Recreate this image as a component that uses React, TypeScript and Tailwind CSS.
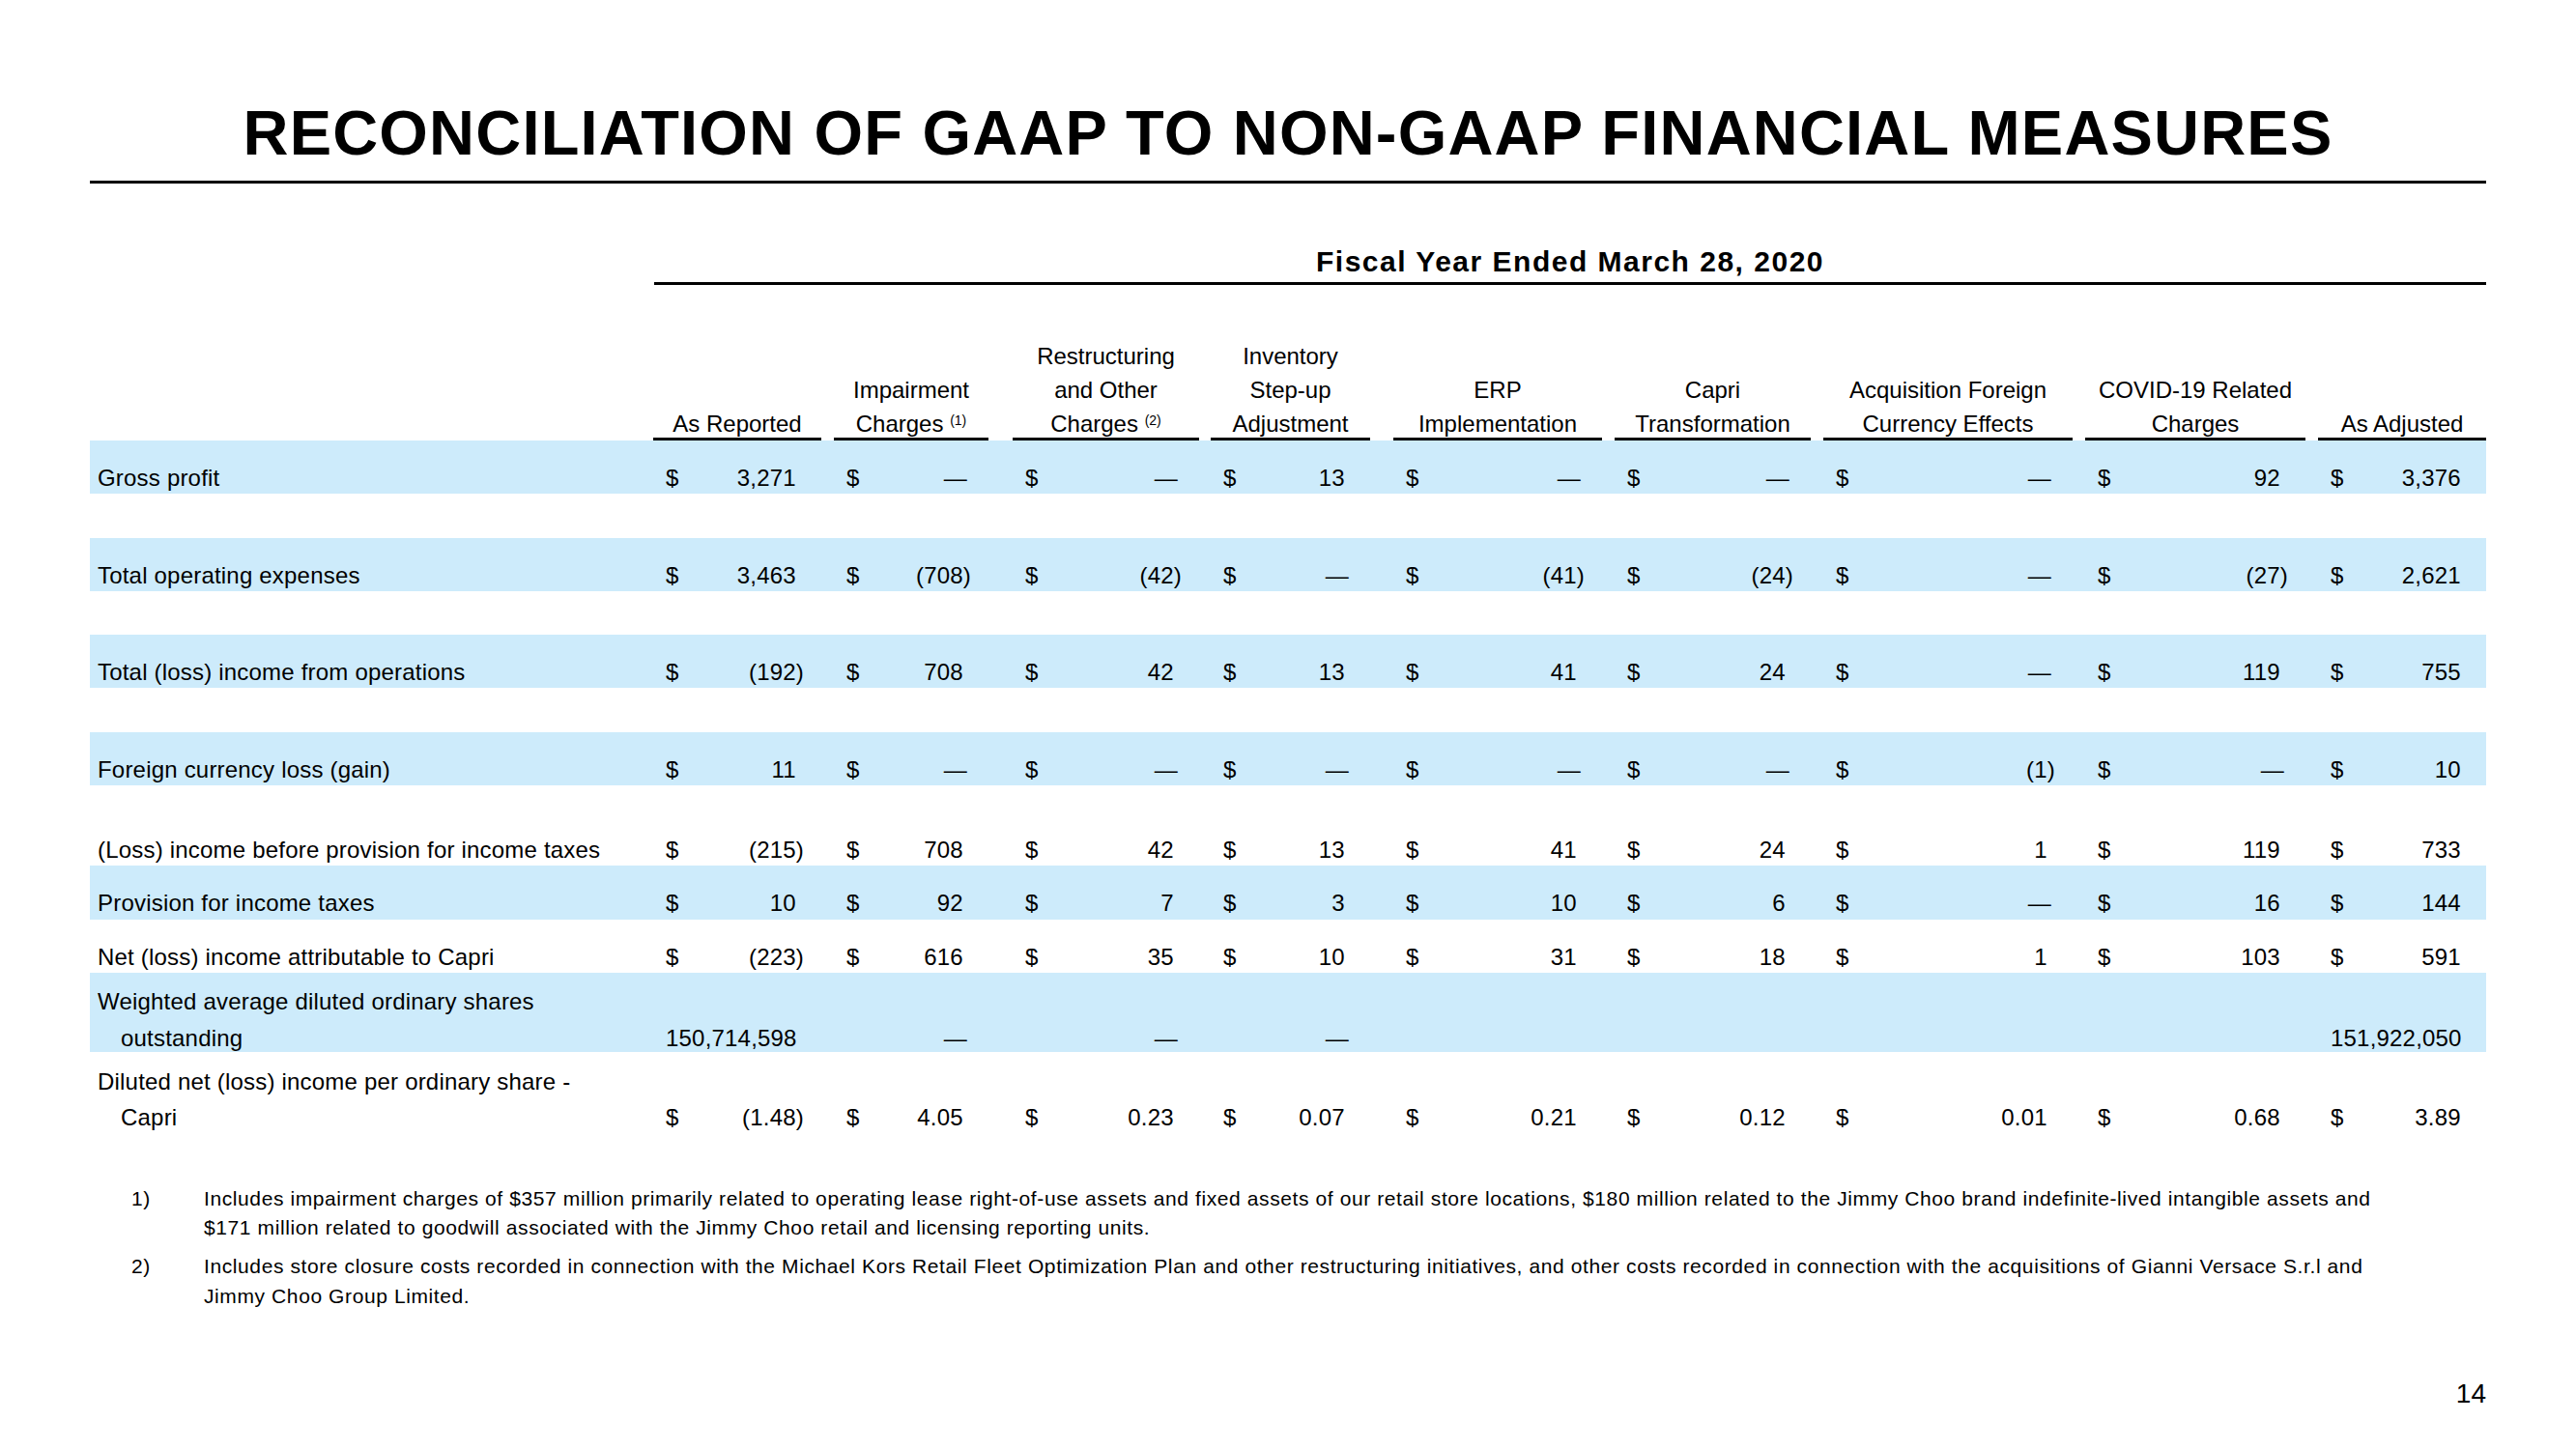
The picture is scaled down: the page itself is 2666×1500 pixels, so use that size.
import React from 'react';

const colW = ['w-[187px]', 'w-[185px]', 'w-[205px]', 'w-[189px]', 'w-[229px]', 'w-[216px]', 'w-[271px]', 'w-[241px]', 'w-[174px]'];
const colU = ['w-[174px]', 'w-[160px]', 'w-[193px]', 'w-[165px]', 'w-[216px]', 'w-[203px]', 'w-[258px]', 'w-[228px]', 'w-[174px]'];

const headers: React.ReactNode[][] = [
  ['As Reported'],
  ['Impairment', <>Charges <sup className="text-[14px]">(1)</sup></>],
  ['Restructuring', 'and Other', <>Charges <sup className="text-[14px]">(2)</sup></>],
  ['Inventory', 'Step-up', 'Adjustment'],
  ['ERP', 'Implementation'],
  ['Capri', 'Transformation'],
  ['Acquisition Foreign', 'Currency Effects'],
  ['COVID-19 Related', 'Charges'],
  ['As Adjusted'],
];

type RowDef = {
  label: React.ReactNode;
  vals: string[];
  band: boolean;
  h: string;
  pb: string;
  dollar: boolean[];
};

const allD = [true, true, true, true, true, true, true, true, true];

const rows: (RowDef | { spacer: string })[] = [
  { label: 'Gross profit', vals: ['3,271', '—', '—', '13', '—', '—', '—', '92', '3,376'], band: true, h: 'h-[55px]', pb: 'pb-[4px]', dollar: allD },
  { spacer: 'h-[46px]' },
  { label: 'Total operating expenses', vals: ['3,463', '(708)', '(42)', '—', '(41)', '(24)', '—', '(27)', '2,621'], band: true, h: 'h-[55px]', pb: 'pb-[4px]', dollar: allD },
  { spacer: 'h-[45px]' },
  { label: 'Total (loss) income from operations', vals: ['(192)', '708', '42', '13', '41', '24', '—', '119', '755'], band: true, h: 'h-[55px]', pb: 'pb-[4px]', dollar: allD },
  { spacer: 'h-[46px]' },
  { label: 'Foreign currency loss (gain)', vals: ['11', '—', '—', '—', '—', '—', '(1)', '—', '10'], band: true, h: 'h-[55px]', pb: 'pb-[4px]', dollar: allD },
  { label: '(Loss) income before provision for income taxes', vals: ['(215)', '708', '42', '13', '41', '24', '1', '119', '733'], band: false, h: 'h-[83px]', pb: 'pb-[4px]', dollar: allD },
  { label: 'Provision for income taxes', vals: ['10', '92', '7', '3', '10', '6', '—', '16', '144'], band: true, h: 'h-[56px]', pb: 'pb-[5px]', dollar: allD },
  { label: 'Net (loss) income attributable to Capri', vals: ['(223)', '616', '35', '10', '31', '18', '1', '103', '591'], band: false, h: 'h-[55px]', pb: 'pb-[4px]', dollar: allD },
  {
    label: (
      <>
        <div>Weighted average diluted ordinary shares</div>
        <div className="mt-[14px] pl-[24px]">outstanding</div>
      </>
    ),
    vals: ['150,714,598', '—', '—', '—', '', '', '', '', '151,922,050'],
    band: true,
    h: 'h-[82px]',
    pb: 'pb-[2px]',
    dollar: [false, false, false, false, false, false, false, false, false],
  },
  {
    label: (
      <>
        <div>Diluted net (loss) income per ordinary share -</div>
        <div className="mt-[13px] pl-[24px]">Capri</div>
      </>
    ),
    vals: ['(1.48)', '4.05', '0.23', '0.07', '0.21', '0.12', '0.01', '0.68', '3.89'],
    band: false,
    h: 'h-[82px]',
    pb: 'pb-[2px]',
    dollar: allD,
  },
];

function Val({ v }: { v: string }) {
  if (v === '') return <span />;
  if (v === '—')
    return (
      <span>
        —<span className="inline-block w-[4px]" />
      </span>
    );
  if (v.startsWith('(')) return <span>{v}</span>;
  return (
    <span>
      {v}
      <span className="invisible">)</span>
    </span>
  );
}

export default function App() {
  return (
    <div className="w-[2666px] h-[1500px] bg-white text-black font-['Liberation_Sans','Arial',sans-serif] overflow-hidden">
      <div className="px-[93px]">
        {/* Title */}
        <div className="pt-[105px] text-[65px] leading-[65px] font-bold text-center tracking-[1.2px] whitespace-nowrap">
          RECONCILIATION OF GAAP TO NON-GAAP FINANCIAL MEASURES
        </div>
        <div className="mt-[17px] h-[3px] bg-black" />

        {/* Fiscal year header */}
        <div className="ml-[584px]">
          <div className="mt-[66px] text-[30px] leading-[30px] font-bold text-center tracking-[1.5px] whitespace-nowrap">
            Fiscal Year Ended March 28, 2020
          </div>
          <div className="mt-[6px] h-[3px] bg-black" />
        </div>

        {/* Column headers */}
        <div className="flex items-end h-[161px] text-[24px] whitespace-nowrap">
          <div className="w-[583px] shrink-0" />
          {headers.map((lines, i) => (
            <div key={i} className={`${colW[i]} shrink-0`}>
              <div className={`${colU[i]} border-b-[3px] border-black text-center`}>
                <div className="mb-[-3px]">
                  {lines.map((l, j) => (
                    <div key={j} className="leading-[35px]">
                      {l}
                    </div>
                  ))}
                </div>
              </div>
            </div>
          ))}
        </div>

        {/* Rows */}
        <div className="text-[24px] leading-[24px] tracking-[0.2px] whitespace-nowrap">
          {rows.map((r, idx) => {
            if ('spacer' in r) return <div key={idx} className={r.spacer} />;
            return (
              <div key={idx} className={`flex items-end ${r.h} ${r.pb} ${r.band ? 'bg-[#cdebfb]' : ''}`}>
                <div className="w-[583px] shrink-0 pl-[8px]">{r.label}</div>
                {r.vals.map((v, i) => (
                  <div key={i} className={`${colW[i]} shrink-0`}>
                    <div className={`${colU[i]} flex justify-between pl-[13px] pr-[18px]`}>
                      <span>{r.dollar[i] && v !== '' ? '$' : ''}</span>
                      <Val v={v} />
                    </div>
                  </div>
                ))}
              </div>
            );
          })}
        </div>

        {/* Footnotes */}
        <div className="mt-[55px] text-[21px] leading-[30px] tracking-[0.6px] whitespace-nowrap">
          <div className="flex">
            <div className="w-[118px] shrink-0 pl-[43px]">1)</div>
            <div>
              <div>
                Includes impairment charges of $357 million primarily related to operating lease right-of-use assets and fixed assets of our retail store locations, $180 million related to the Jimmy Choo brand indefinite-lived intangible assets and
              </div>
              <div>$171 million related to goodwill associated with the Jimmy Choo retail and licensing reporting units.</div>
            </div>
          </div>
          <div className="flex mt-[10px]">
            <div className="w-[118px] shrink-0 pl-[43px]">2)</div>
            <div>
              <div>
                Includes store closure costs recorded in connection with the Michael Kors Retail Fleet Optimization Plan and other restructuring initiatives, and other costs recorded in connection with the acquisitions of Gianni Versace S.r.l and
              </div>
              <div className="mt-[1px]">Jimmy Choo Group Limited.</div>
            </div>
          </div>
        </div>

        {/* Page number */}
        <div className="mt-[72px] text-right text-[28px] leading-[28px]">14</div>
      </div>
    </div>
  );
}
